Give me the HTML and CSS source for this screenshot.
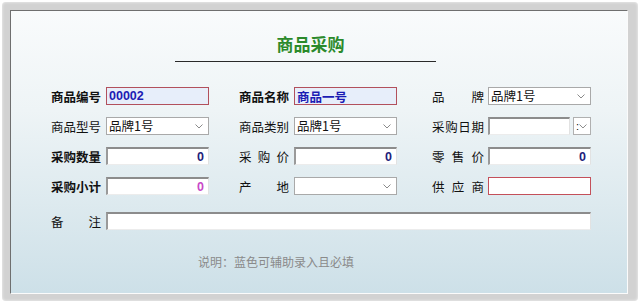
FILE: index.html
```html
<!DOCTYPE html>
<html lang="zh-CN">
<head>
    <meta charset="UTF-8">
    <title>商品采购</title>
    <link rel="stylesheet" href="styles.css">
</head>
<body>
    <div class="window">
        <div class="panel">
            <div class="head">
                <h1 class="title">商品采购</h1>
                <div class="rule"></div>
            </div>

            <div class="form">
                <div class="field">
                    <label class="bold">商品编号</label>
                    <input class="box req" type="text" value="00002">
                </div>
                <div class="field">
                    <label class="bold">商品名称</label>
                    <input class="box req" type="text" value="商品一号">
                </div>
                <div class="field">
                    <label>品牌</label>
                    <div class="box select">品牌1号<span class="chev"><svg width="8" height="5" viewBox="0 0 8 5"><polyline points="0.5,0.5 4,4 7.5,0.5" fill="none" stroke="#8a8a8a" stroke-width="1"/></svg></span></div>
                </div>

                <div class="field">
                    <label>商品型号</label>
                    <div class="box select">品牌1号<span class="chev"><svg width="8" height="5" viewBox="0 0 8 5"><polyline points="0.5,0.5 4,4 7.5,0.5" fill="none" stroke="#8a8a8a" stroke-width="1"/></svg></span></div>
                </div>
                <div class="field">
                    <label>商品类别</label>
                    <div class="box select">品牌1号<span class="chev"><svg width="8" height="5" viewBox="0 0 8 5"><polyline points="0.5,0.5 4,4 7.5,0.5" fill="none" stroke="#8a8a8a" stroke-width="1"/></svg></span></div>
                </div>
                <div class="field">
                    <label>采购日期</label>
                    <div class="date">
                        <input class="box sunk" type="text" value="">
                        <div class="spin">:<svg width="8" height="5" viewBox="0 0 8 5"><polyline points="0.5,0.5 4,4 7.5,0.5" fill="none" stroke="#8a8a8a" stroke-width="1"/></svg></div>
                    </div>
                </div>

                <div class="field">
                    <label class="bold">采购数量</label>
                    <input class="box sunk num" type="text" value="0">
                </div>
                <div class="field">
                    <label>采购价</label>
                    <input class="box sunk num" type="text" value="0">
                </div>
                <div class="field">
                    <label>零售价</label>
                    <input class="box sunk num" type="text" value="0">
                </div>

                <div class="field">
                    <label class="bold">采购小计</label>
                    <input class="box sunk num pink" type="text" value="0">
                </div>
                <div class="field">
                    <label>产地</label>
                    <div class="box select"><span class="chev"><svg width="8" height="5" viewBox="0 0 8 5"><polyline points="0.5,0.5 4,4 7.5,0.5" fill="none" stroke="#8a8a8a" stroke-width="1"/></svg></span></div>
                </div>
                <div class="field">
                    <label>供应商</label>
                    <input class="box must" type="text" value="">
                </div>

                <div class="field wide">
                    <label>备注</label>
                    <input class="box sunk memo" type="text" value="">
                </div>
            </div>

            <p class="note">说明：蓝色可辅助录入且必填</p>
        </div>
    </div>
</body>
</html>
```

FILE: styles.css
```css
body {
    margin: 0;
    background: #fff;
    font-family: "Liberation Sans", "Noto Sans CJK SC", sans-serif;
    font-size: 12.5px;
    color: #111;
}
.window {
    margin: 2px 2px 0 2px;
    height: 299px;
    box-sizing: border-box;
    padding: 8px 10px 7px 8px;
    background: #d2d2d2;
    border-radius: 4px;
    box-shadow: inset 0 0 3px #f4f4f4;
}
.panel {
    height: 100%;
    box-sizing: border-box;
    border-top: 1px solid #6f6f6f;
    border-left: 1px solid #6f6f6f;
    border-right: 1px solid #fbfbfb;
    border-bottom: 1px solid #fbfbfb;
    background: linear-gradient(#f9fbfc, #eef4f6 35%, #cde0e8);
    overflow: hidden;
}
.head {
    width: 261px;
    margin: 23px 0 0 164px;
}
.title {
    margin: 0;
    padding-left: 10px;
    text-align: center;
    font-family: "Noto Sans CJK SC", sans-serif;
    font-size: 17px;
    line-height: 20px;
    font-weight: 700;
    color: #2b8a2b;
}
.rule {
    margin-top: 7px;
    height: 1px;
    background: #2a2a2a;
}
.form {
    display: grid;
    grid-template-columns: 188px 193px 159px;
    row-gap: 12px;
    margin: 25px 0 0 40px;
}
.field {
    display: flex;
    align-items: center;
    height: 18px;
}
.field label {
    width: 50px;
    margin-right: 5px;
    flex: none;
    text-align: justify;
    text-align-last: justify;
    font-family: "Noto Sans CJK SC", sans-serif;
    white-space: nowrap;
}
.field label.bold {
    font-weight: 700;
}
.field:nth-child(3n) label {
    width: 52px;
    margin-right: 4px;
}
.wide {
    grid-column: 1 / 4;
    margin-top: 5px;
}
.box {
    width: 103px;
    height: 18px;
    box-sizing: border-box;
    margin: 0;
    padding: 0 2px;
    font: inherit;
    font-family: "Liberation Sans", "Noto Sans CJK SC", sans-serif;
    color: #111;
    background: #fff;
    outline: none;
}
.req {
    border: 1px solid #b2505c;
    background: #e7eefa;
    color: #1c1cb4;
    font-weight: 700;
}
.sunk {
    border-style: solid;
    border-width: 2px 1px 1px 2px;
    border-color: #8c8c8c #e2e2e2 #ececec #9a9a9a;
}
.num {
    text-align: right;
    padding-right: 4px;
    font-weight: 700;
    color: #1e1e7a;
}
.pink {
    color: #c848c8;
}
.must {
    border: 1px solid #c4505a;
}
.select {
    display: flex;
    align-items: center;
    border: 1px solid #a9a9a9;
    font-family: "Noto Sans CJK SC", sans-serif;
    line-height: 16px;
}
.chev {
    margin-left: auto;
    margin-right: 3px;
    display: flex;
}
.date {
    display: flex;
    align-items: center;
}
.date .box {
    width: 82px;
}
.spin {
    display: flex;
    align-items: center;
    justify-content: space-between;
    width: 18px;
    height: 18px;
    box-sizing: border-box;
    margin-left: 3px;
    padding: 0 3px 0 2px;
    border: 1px solid #b0b0b0;
    background: #fff;
    font-size: 11px;
    line-height: 14px;
}
.memo {
    width: 485px;
}
.note {
    margin: 24px 0 0 187px;
    font-family: "Noto Sans CJK SC", sans-serif;
    font-size: 12px;
    line-height: 16px;
    color: #8a8a8a;
}
```
